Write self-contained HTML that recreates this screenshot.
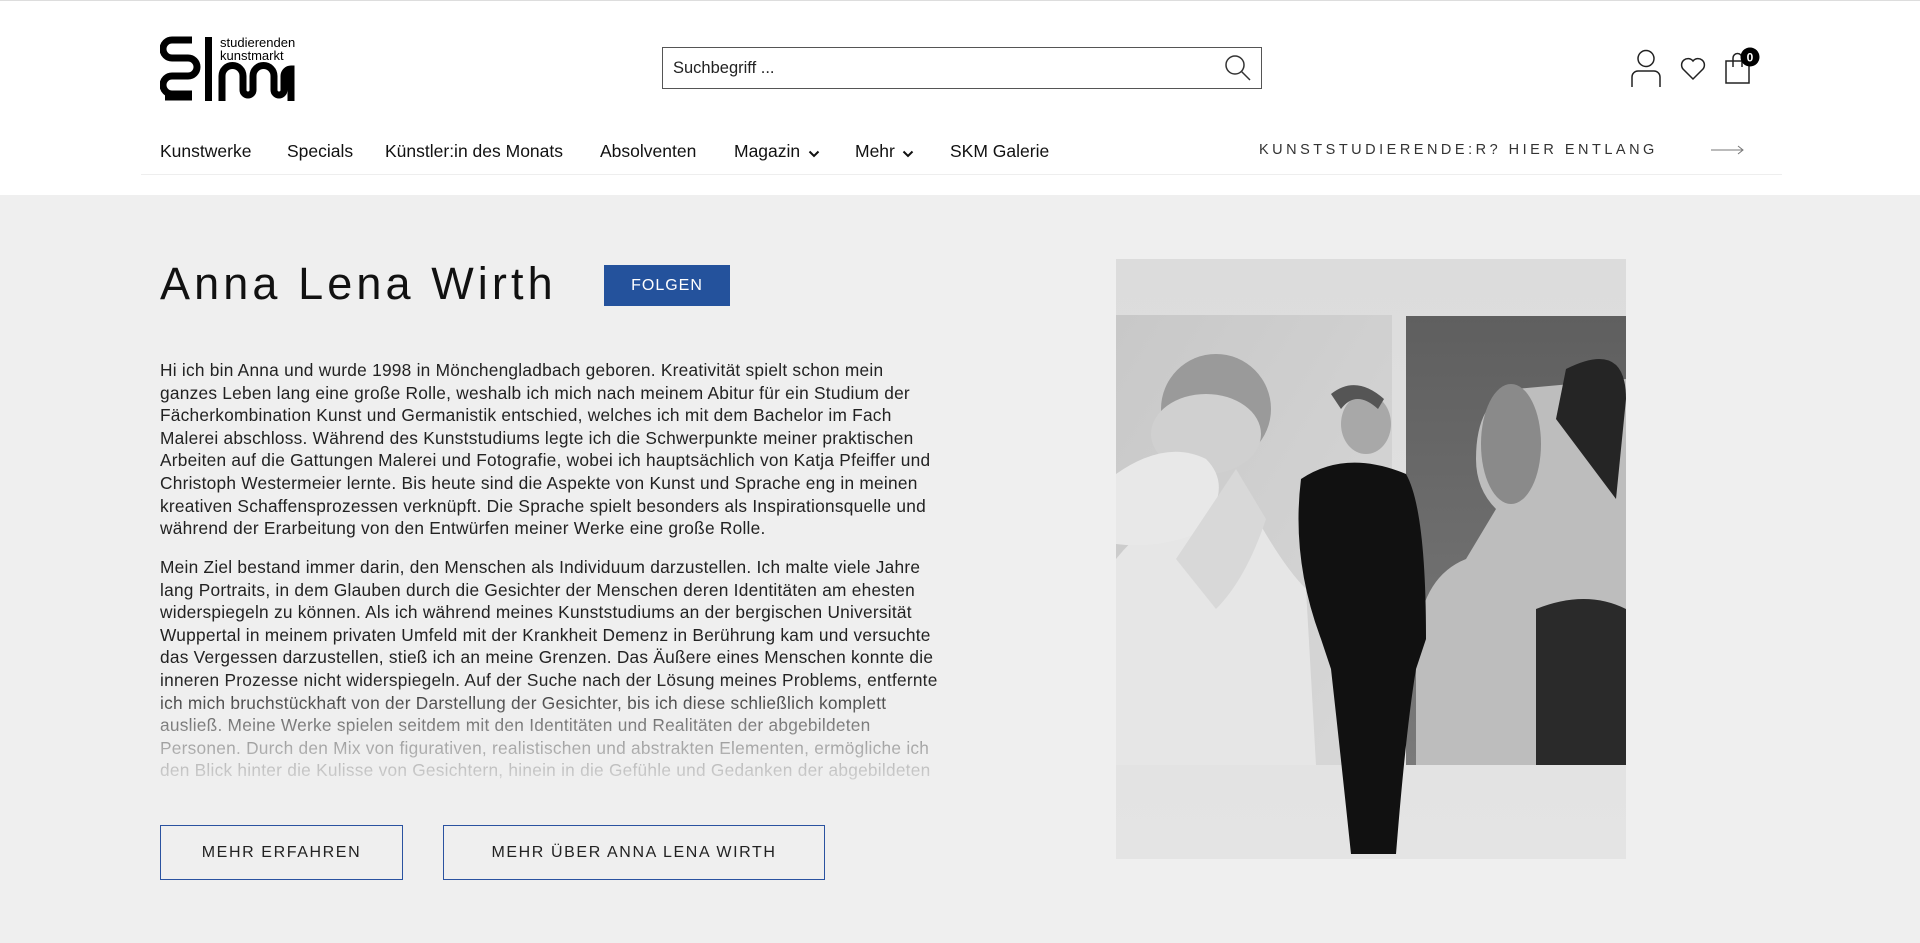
<!DOCTYPE html>
<html><head><meta charset="utf-8">
<style>
*{margin:0;padding:0;box-sizing:border-box}
body{width:1920px;height:943px;overflow:hidden;background:#efefef;font-family:"Liberation Sans",sans-serif;color:#111;position:relative}
.hdr{position:absolute;left:0;top:0;width:1920px;height:195px;background:#fff;border-top:1px solid #ddd}
.abs{position:absolute}
.nav span{position:absolute;top:140px;font-size:17.5px;color:#111;white-space:nowrap}
.para{position:absolute;left:160px;font-size:17.3px;line-height:22.6px;color:#222;letter-spacing:0.25px}
.para div{white-space:nowrap}
.btn{position:absolute;top:825px;height:55px;border:1.5px solid #2a52a0;color:#222;font-size:16px;letter-spacing:1.6px;display:flex;align-items:center;justify-content:center}
</style></head><body>
<div class="hdr">
  <svg class="abs" style="left:160px;top:33px" width="142" height="70" viewBox="0 0 142 70">
    <path d="M32 6 H12 a9 9 0 0 0 0 18 H28 a9 9 0 0 1 0 18 H12 a9 9 0 0 0 0 18 H32" fill="none" stroke="#000" stroke-width="7"/>
    <path d="M5 63 H32" stroke="#000" stroke-width="7"/>
    <rect x="45" y="3" width="7" height="64" fill="#000"/>
    <path d="M62 67 V42 a10.5 10.5 0 0 1 21 0 V56 a5 5 0 0 0 10 0 V42 a10.5 10.5 0 0 1 21 0 V56 a5 5 0 0 0 10 0 V42 a7 7 0 0 1 7 -7 V67" fill="none" stroke="#000" stroke-width="7"/>
    <text x="60" y="13" font-size="13" font-family="Liberation Sans" fill="#000">studierenden</text>
    <text x="60" y="26" font-size="13" font-family="Liberation Sans" fill="#000">kunstmarkt</text>
  </svg>
  <div class="abs" style="left:662px;top:46px;width:600px;height:42px;border:1px solid #555;font-size:16.5px;line-height:40px;padding-left:10px;color:#222">Suchbegriff ...</div>
  <svg class="abs" style="left:1224px;top:53px" width="28" height="28" viewBox="0 0 28 28"><circle cx="11" cy="11" r="9" fill="none" stroke="#333" stroke-width="1.5"/><path d="M17.5 17.5 L26 26" stroke="#333" stroke-width="1.5"/></svg>
  <svg class="abs" style="left:1630px;top:48px" width="32" height="38" viewBox="0 0 32 38"><circle cx="16" cy="9.5" r="8" fill="none" stroke="#222" stroke-width="1.5"/><path d="M2 38 V28 a6 6 0 0 1 6 -6 H24 a6 6 0 0 1 6 6 V38" fill="none" stroke="#222" stroke-width="1.5"/></svg>
  <svg class="abs" style="left:1680px;top:56px" width="26" height="24" viewBox="0 0 26 24"><path d="M13 22 L3 12 a5.5 5.5 0 0 1 10 -8 a5.5 5.5 0 0 1 10 8 Z" fill="none" stroke="#222" stroke-width="1.5"/></svg>
  <svg class="abs" style="left:1724px;top:46px" width="40" height="38" viewBox="0 0 40 38"><rect x="2" y="14" width="23" height="22" fill="none" stroke="#222" stroke-width="1.5"/><path d="M9 20 V11 a4.5 4.5 0 0 1 9 0 V20" fill="none" stroke="#222" stroke-width="1.5"/><circle cx="26" cy="10" r="9.5" fill="#000"/><text x="26" y="14.5" text-anchor="middle" font-size="12" font-weight="bold" fill="#fff" font-family="Liberation Sans">0</text></svg>
  <div class="nav">
    <span style="left:160px">Kunstwerke</span>
    <span style="left:287px">Specials</span>
    <span style="left:385px">Künstler:in des Monats</span>
    <span style="left:600px">Absolventen</span>
    <span style="left:734px">Magazin</span>
    <span style="left:855px">Mehr</span>
    <span style="left:950px">SKM Galerie</span>
  </div>
  <svg class="abs" style="left:808px;top:149px" width="12" height="8"><path d="M1.5 1.5 L6 6 L10.5 1.5" fill="none" stroke="#111" stroke-width="2"/></svg>
  <svg class="abs" style="left:902px;top:149px" width="12" height="8"><path d="M1.5 1.5 L6 6 L10.5 1.5" fill="none" stroke="#111" stroke-width="2"/></svg>
  <div class="abs" style="left:1259px;top:141px;font-size:14.5px;letter-spacing:3.5px;color:#333;white-space:nowrap">KUNSTSTUDIERENDE:R? HIER ENTLANG</div>
  <svg class="abs" style="left:1711px;top:144px" width="34" height="10"><path d="M0 5 H32 M27 1 L32 5 L27 9" fill="none" stroke="#777" stroke-width="1"/></svg>
  <div class="abs" style="left:141px;top:173px;width:1641px;height:1px;background:#eee"></div>
</div>

<div class="abs" style="left:160px;top:258px;font-size:45px;letter-spacing:4.1px;color:#111;white-space:nowrap">Anna Lena Wirth</div>
<div class="abs" style="left:604px;top:265px;width:126px;height:41px;background:#24529c;color:#fff;font-size:16px;letter-spacing:1px;display:flex;align-items:center;justify-content:center">FOLGEN</div>

<div class="para" style="top:359px">
<div>Hi ich bin Anna und wurde 1998 in Mönchengladbach geboren. Kreativität spielt schon mein</div>
<div>ganzes Leben lang eine große Rolle, weshalb ich mich nach meinem Abitur für ein Studium der</div>
<div>Fächerkombination Kunst und Germanistik entschied, welches ich mit dem Bachelor im Fach</div>
<div>Malerei abschloss. Während des Kunststudiums legte ich die Schwerpunkte meiner praktischen</div>
<div>Arbeiten auf die Gattungen Malerei und Fotografie, wobei ich hauptsächlich von Katja Pfeiffer und</div>
<div>Christoph Westermeier lernte. Bis heute sind die Aspekte von Kunst und Sprache eng in meinen</div>
<div>kreativen Schaffensprozessen verknüpft. Die Sprache spielt besonders als Inspirationsquelle und</div>
<div>während der Erarbeitung von den Entwürfen meiner Werke eine große Rolle.</div>
</div>
<div class="para" style="top:556px;height:224px;overflow:hidden;-webkit-mask-image:linear-gradient(#000 55%,rgba(0,0,0,.35) 85%,rgba(0,0,0,.15));mask-image:linear-gradient(#000 55%,rgba(0,0,0,.35) 85%,rgba(0,0,0,.15))">
<div>Mein Ziel bestand immer darin, den Menschen als Individuum darzustellen. Ich malte viele Jahre</div>
<div>lang Portraits, in dem Glauben durch die Gesichter der Menschen deren Identitäten am ehesten</div>
<div>widerspiegeln zu können. Als ich während meines Kunststudiums an der bergischen Universität</div>
<div>Wuppertal in meinem privaten Umfeld mit der Krankheit Demenz in Berührung kam und versuchte</div>
<div>das Vergessen darzustellen, stieß ich an meine Grenzen. Das Äußere eines Menschen konnte die</div>
<div>inneren Prozesse nicht widerspiegeln. Auf der Suche nach der Lösung meines Problems, entfernte</div>
<div>ich mich bruchstückhaft von der Darstellung der Gesichter, bis ich diese schließlich komplett</div>
<div>ausließ. Meine Werke spielen seitdem mit den Identitäten und Realitäten der abgebildeten</div>
<div>Personen. Durch den Mix von figurativen, realistischen und abstrakten Elementen, ermögliche ich</div>
<div>den Blick hinter die Kulisse von Gesichtern, hinein in die Gefühle und Gedanken der abgebildeten</div>
</div>

<div class="btn" style="left:160px;width:243px">MEHR ERFAHREN</div>
<div class="btn" style="left:443px;width:382px">MEHR ÜBER ANNA LENA WIRTH</div>

<svg class="abs" style="left:1116px;top:259px" width="510" height="600" viewBox="0 0 510 600">
  <defs>
    <linearGradient id="wall" x1="0" y1="0" x2="0" y2="1"><stop offset="0" stop-color="#dcdcdc"/><stop offset="1" stop-color="#e4e4e4"/></linearGradient>
    <linearGradient id="lp" x1="0" y1="0" x2="1" y2="1"><stop offset="0" stop-color="#c8c8c8"/><stop offset="1" stop-color="#d8d8d8"/></linearGradient>
    <linearGradient id="rp" x1="0" y1="0" x2="0" y2="1"><stop offset="0" stop-color="#5f5f5f"/><stop offset="1" stop-color="#7a7a7a"/></linearGradient>
  </defs>
  <rect width="510" height="600" fill="url(#wall)"/>
  <rect x="0" y="56" width="276" height="450" fill="url(#lp)"/>
  <rect x="290" y="57" width="220" height="449" fill="url(#rp)"/>
  <path d="M0 506 V300 Q40 250 80 260 L120 220 Q160 300 190 330 L200 506 Z" fill="#e6e6e6"/>
  <ellipse cx="100" cy="150" rx="55" ry="55" fill="#9a9a9a"/>
  <ellipse cx="90" cy="175" rx="55" ry="40" fill="#d0d0d0"/>
  <path d="M0 215 Q50 180 90 200 Q120 230 80 275 Q40 290 0 285 Z" fill="#e8e8e8"/>
  <path d="M60 300 Q100 240 120 210 L150 260 Q130 320 100 350 Z" fill="#d8d8d8"/>
  <path d="M400 130 Q360 140 360 200 Q360 230 380 250 L350 300 Q300 320 300 400 L300 506 H510 V120 Z" fill="#bdbdbd"/>
  <path d="M420 350 Q470 330 510 350 V506 H420 Z" fill="#2a2a2a"/>
  <path d="M450 110 Q510 80 510 140 L500 240 Q470 200 440 160 Z" fill="#252525"/>
  <ellipse cx="395" cy="185" rx="30" ry="60" fill="#8a8a8a"/>
  <ellipse cx="250" cy="165" rx="25" ry="30" fill="#a8a8a8"/>
  <path d="M215 135 Q240 115 268 140 L262 150 Q240 130 225 150 Z" fill="#555"/>
  <path d="M185 220 Q230 190 290 215 Q310 250 310 380 L300 410 Q290 470 280 595 H235 Q225 500 215 410 L205 380 Q175 300 185 220 Z" fill="#111"/>
</svg>
</body></html>
